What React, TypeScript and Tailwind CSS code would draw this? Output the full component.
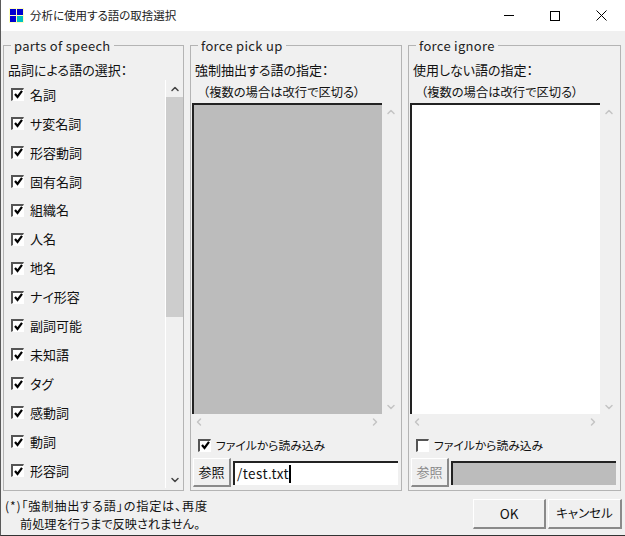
import { ChevronUp, ChevronDown, ChevronLeft, ChevronRight } from "lucide-react"

const speech = ["名詞", "サ変名詞", "形容動詞", "固有名詞", "組織名", "人名", "地名", "ナイ形容", "副詞可能", "未知語", "タグ", "感動詞", "動詞", "形容詞"]

function Check({ on }: { on: boolean }) {
  return (
    <span className="flex h-[13px] w-[13px] shrink-0 items-center justify-center border-t-2 border-l-2 border-t-[#555] border-l-[#555] border-r border-b border-r-white border-b-white bg-white">
      {on && (
        <svg width="9" height="9" viewBox="0 0 9 9">
          <path d="M1 4 L3.5 7 L8 0.8" fill="none" stroke="#000" strokeWidth="2.2" />
        </svg>
      )}
    </span>
  )
}

function Group({ title, className, children }: { title: string; className: string; children: React.ReactNode }) {
  return (
    <fieldset className={`flex flex-col border border-[#b4b4b4] ${className}`}>
      <legend className="ml-[7px] px-[3px] text-[13px] leading-[13px] tracking-[0.3px] text-[#222]">{title}</legend>
      {children}
    </fieldset>
  )
}

function TextPanel({ label, bg, on, disabled, path }: { label: string; bg: string; on: boolean; disabled?: boolean; path?: string }) {
  return (
    <div className="flex flex-1 flex-col pl-[1px]">
      <p className="pl-[3px] pt-[9px] text-[13px] leading-[18px]">{label}</p>
      <p className="pl-[11px] pt-[4px] text-[12.3px] leading-[18px]">（複数の場合は改行で区切る）</p>
      <div className="mt-[2px] flex h-[311px]">
        <div className={`w-[190px] border-t-2 border-l-2 border-t-[#222] border-l-[#222] ${bg}`} />
        <div className="flex w-[17px] flex-col items-center justify-between bg-[#f0f0f0] py-[3px] pb-[1px] text-[#c4c4c4]">
          <ChevronUp size={12} strokeWidth={3} />
          <ChevronDown size={12} strokeWidth={3} />
        </div>
      </div>
      <div className="flex h-[16px] w-[190px] items-center justify-between px-[1px] text-[#c4c4c4]">
        <ChevronLeft size={12} strokeWidth={3} />
        <ChevronRight size={12} strokeWidth={3} />
      </div>
      <label className="mt-[5px] flex h-[20px] items-center gap-[5px] pl-[6px] text-[11.8px]">
        <Check on={on} />
        <span>ファイルから読み込み</span>
      </label>
      <div className="mt-[3px] flex items-center gap-[2px] pl-[1px]">
        <button className={`h-[29px] w-[38px] border-t border-l border-t-white border-l-white border-r-2 border-b-2 border-r-[#8a8a8a] border-b-[#8a8a8a] bg-[#f0f0f0] text-[13px] ${disabled ? "text-[#8c8c8c]" : ""}`}>
          参照
        </button>
        <div className={`flex h-[24px] w-[165px] items-center border-t-2 border-l-2 border-t-[#222] border-l-[#222] px-[2px] text-[13.5px] tracking-[0.4px] ${disabled ? "bg-[#bcbcbc]" : "bg-white"}`}>
          {path}
          {path && <span className="h-[18px] w-[2px] bg-black" />}
        </div>
      </div>
    </div>
  )
}

export default function App() {
  return (
    <div className="flex h-[536px] w-[625px] flex-col overflow-hidden border-l border-b border-l-[#5a5a5a] border-b-[#333] bg-[#f0f0f0] font-['Noto_Sans_CJK_JP','Noto_Sans',sans-serif] text-[#111] [font-feature-settings:'palt']">
      {/* タイトルバー */}
      <header className="flex h-[31px] shrink-0 items-center bg-white">
        <div className="ml-[8px] grid h-[15px] w-[15px] grid-cols-2 gap-[1px] bg-[#ffffc0] p-[1px]">
          <span className="bg-[#0000d0]" />
          <span className="bg-[#0000d0]" />
          <span className="bg-[#0000d0]" />
          <span className="bg-[#00c0c0]" />
        </div>
        <h1 className="ml-[6px] text-[11.5px] text-[#222]">分析に使用する語の取捨選択</h1>
        <div className="ml-auto flex h-full">
          <div className="flex w-[46px] items-center justify-center">
            <span className="h-px w-[10px] bg-black" />
          </div>
          <div className="flex w-[46px] items-center justify-center">
            <span className="h-[10px] w-[10px] border border-black" />
          </div>
          <div className="mr-[1px] flex w-[46px] items-center justify-center">
            <svg width="11" height="11" viewBox="0 0 11 11">
              <path d="M0.5 0.5 L10.5 10.5 M10.5 0.5 L0.5 10.5" stroke="#000" strokeWidth="1" />
            </svg>
          </div>
        </div>
      </header>

      <main className="mt-[8px] flex gap-[6px] pl-[2px]">
        <Group title="parts of speech" className="h-[452px] w-[181px]">
          <p className="pl-[4px] pt-[9px] text-[13px] leading-[18px]">品詞による語の選択：</p>
          <div className="mt-[1px] flex h-[408px]">
            <ul className="flex w-[161px] flex-col">
              {speech.map((s) => (
                <li key={s} className="flex h-[28.95px] shrink-0 items-center gap-[6px] pl-[7px] text-[13px]">
                  <Check on />
                  <span>{s}</span>
                </li>
              ))}
            </ul>
            <div className="flex w-[18px] flex-col border-l border-l-white">
              <div className="flex h-[17px] items-center justify-center text-[#444]">
                <ChevronUp size={12} strokeWidth={3} />
              </div>
              <div className="h-[220px] bg-[#cdcdcd]" />
              <div className="mt-auto flex h-[16px] items-center justify-center text-[#444]">
                <ChevronDown size={12} strokeWidth={3} />
              </div>
            </div>
          </div>
        </Group>
        <Group title="force pick up" className="h-[452px] w-[212px]">
          <TextPanel label="強制抽出する語の指定：" bg="bg-[#bcbcbc]" on path="/test.txt" />
        </Group>
        <Group title="force ignore" className="h-[452px] w-[213px]">
          <TextPanel label="使用しない語の指定：" bg="bg-white" on={false} disabled />
        </Group>
      </main>

      <footer className="flex flex-1 items-start justify-between pl-[4px] pr-[3px] pt-[6px]">
        <div className="text-[12.2px] leading-[18px]">
          <p className="tracking-[0.8px]">(*)「強制抽出する語」の指定は、再度</p>
          <p className="pl-[15px]">前処理を行うまで反映されません。</p>
        </div>
        <div className="flex gap-[2px] pt-[2px]">
          <button className="h-[30px] w-[73px] border-t border-l border-t-white border-l-white border-r-2 border-b-2 border-r-[#8a8a8a] border-b-[#8a8a8a] text-[13.5px]">OK</button>
          <button className="h-[30px] w-[74px] border-t border-l border-t-white border-l-white border-r-2 border-b-2 border-r-[#8a8a8a] border-b-[#8a8a8a] text-[12.5px]">キャンセル</button>
        </div>
      </footer>
    </div>
  )
}
